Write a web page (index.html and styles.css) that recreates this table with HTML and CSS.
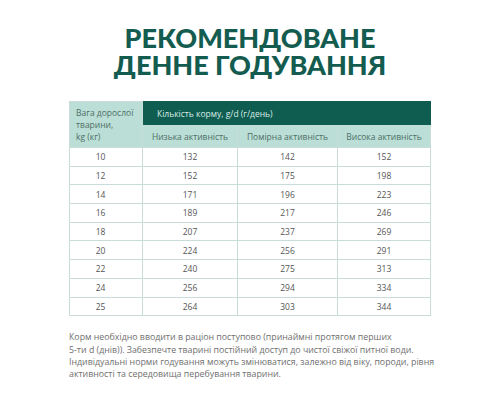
FILE: index.html
```html
<!DOCTYPE html>
<html lang="uk">
<head>
<meta charset="utf-8">
<link rel="stylesheet" href="styles.css">
</head>
<body>
<main class="page">
  <h1 class="title"><span class="line">РЕКОМЕНДОВАНЕ</span><span class="line">ДЕННЕ ГОДУВАННЯ</span></h1>
  <table class="feed">
    <colgroup>
      <col class="c1"><col class="c2"><col class="c3"><col class="c4">
    </colgroup>
    <thead>
      <tr>
        <th rowspan="2" class="weight">Вага дорослої<br>тварини,<br>kg (кг)</th>
        <th colspan="3" class="amount">Кількість корму, g/d (г/день)</th>
      </tr>
      <tr class="sub">
        <th>Низька активність</th>
        <th>Помірна активність</th>
        <th>Висока активність</th>
      </tr>
    </thead>
    <tbody>
      <tr><td>10</td><td>132</td><td>142</td><td>152</td></tr>
      <tr><td>12</td><td>152</td><td>175</td><td>198</td></tr>
      <tr><td>14</td><td>171</td><td>196</td><td>223</td></tr>
      <tr><td>16</td><td>189</td><td>217</td><td>246</td></tr>
      <tr><td>18</td><td>207</td><td>237</td><td>269</td></tr>
      <tr><td>20</td><td>224</td><td>256</td><td>291</td></tr>
      <tr><td>22</td><td>240</td><td>275</td><td>313</td></tr>
      <tr><td>24</td><td>256</td><td>294</td><td>334</td></tr>
      <tr><td>25</td><td>264</td><td>303</td><td>344</td></tr>
    </tbody>
  </table>
  <p class="note">Корм необхідно вводити в раціон поступово (принаймні протягом перших<br>5-ти d (днів)). Забезпечте тварині постійний доступ до чистої свіжої питної води.<br>Індивідуальні норми годування можуть змінюватися, залежно від віку, породи, рівня<br>активності та середовища перебування тварини.</p>
</main>
</body>
</html>
```
FILE: styles.css
```css
html, body {
  margin: 0;
  padding: 0;
  background: #ffffff;
}
.page {
  width: 500px;
  height: 400px;
  padding-top: 24px;
  box-sizing: border-box;
  font-family: "Open Sans", "Noto Sans", sans-serif;
}
.title {
  margin: 0;
  text-align: center;
  font-family: "Lato", sans-serif;
  font-weight: 900;
  font-size: 27px;
  line-height: 27px;
  color: #135c4f;
}
.title .line {
  display: block;
  height: 27px;
}
.feed {
  margin: 23px 0 0 69px;
  width: 361px;
  border-collapse: collapse;
  table-layout: fixed;
  font-size: 8.5px;
  color: #555;
}
.c1 { width: 73px; }
.c2 { width: 95px; }
.c3 { width: 100px; }
.c4 { width: 93px; }
.feed th, .feed td {
  border: 1.5px solid #c9ddd8;
  padding: 0;
  font-weight: 400;
}
.weight {
  background: #bbdfd6;
  text-align: left;
  vertical-align: middle;
  padding-left: 6px !important;
  line-height: 12px;
  color: #4e6e67;
}
.amount {
  background: #0f5c50;
  color: #d9ece7;
  text-align: left;
  padding-left: 14px !important;
  height: 22px;
  border-color: #0f5c50 !important;
}
.sub th {
  background: #bbdfd6;
  color: #4e6e67;
  height: 22px;
  text-align: center;
}
.feed td {
  text-align: center;
  height: 17.7px;
}
.feed td:first-child {
  padding-right: 11px;
}
.note {
  margin: 15px 0 0 69px;
  font-size: 8.8px;
  line-height: 12.4px;
  color: #6f6f6f;
}
```
